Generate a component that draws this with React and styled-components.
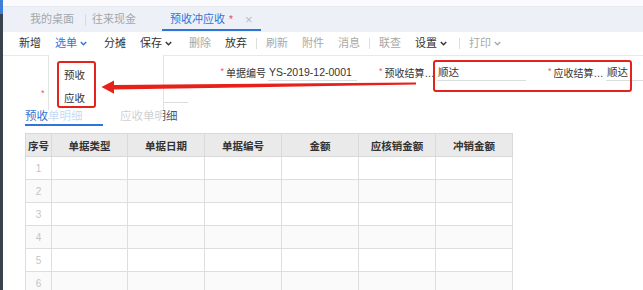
import React from 'react';
import styled, { createGlobalStyle } from 'styled-components';

const Global = createGlobalStyle`
  html, body { margin: 0; padding: 0; background: #fff; }
  body {
    font-family: "Liberation Sans", "Noto Sans CJK SC", sans-serif;
    font-size: 11px;
    color: #333;
  }
`;

const Page = styled.div`
  position: relative;
  width: 643px;
  height: 290px;
  overflow: hidden;
  display: flex;
  align-items: flex-start;
  background: #fff;
`;

const SideBar = styled.div`
  width: 3px;
  height: 290px;
  flex: none;
  background: linear-gradient(#3c7fd8 0 14px, #3a424d 14px);
`;

const Main = styled.div`
  flex: 1;
  min-width: 0;
`;

const TopStrip = styled.div`
  height: 6px;
  background: #fbfbfd;
  border-bottom: 1px solid #e6e9ef;
`;

const TabBar = styled.div`
  height: 25px;
  background: #edf1f7;
  display: flex;
  align-items: stretch;
  padding-left: 21px;
`;

const Tab = styled.div`
  position: relative;
  display: flex;
  align-items: center;
  padding: 0 ${p => (p.$active ? '8px' : '6px')};
  margin-left: ${p => (p.$active ? '20px' : '0')};
  color: ${p => (p.$active ? '#2f74d8' : '#a3a7ae')};
  font-size: 11px;
  line-height: 1;
  &::after {
    content: '';
    display: ${p => (p.$active ? 'block' : 'none')};
    position: absolute;
    left: 0;
    right: 0;
    bottom: 1px;
    height: 2px;
    background: #2f74d8;
  }
`;

const TabSep = styled.div`
  align-self: center;
  width: 1px;
  height: 12px;
  background: #d5d9e0;
  margin-left: 5px;
`;

const Star = styled.span`
  color: #e94b4b;
  margin-left: 4px;
  font-size: 10px;
`;

const Close = styled.span`
  color: #b9bdc4;
  margin-left: 12px;
  font-size: 13px;
`;

const Toolbar = styled.div`
  height: 23px;
  display: flex;
  align-items: center;
  padding-left: 9px;
  background: #fff;
  border-bottom: 1px solid #e9e9e9;
`;

const toneColor = { normal: '#333', primary: '#2f74d8', disabled: '#a8a8a8' };

const ToolBtn = styled.div`
  display: flex;
  align-items: center;
  padding: 0 7px;
  color: ${p => toneColor[p.$tone || 'normal']};
  font-size: 11px;
  line-height: 1;
  white-space: nowrap;
`;

const Chevron = styled.svg`
  width: 7px;
  height: 5px;
  margin-left: 3px;
  margin-right: 3px;
`;

const ToolSep = styled.div`
  width: 1px;
  height: 11px;
  background: #dedede;
  margin: 0 2px;
`;

const FormGrid = styled.div`
  display: grid;
  grid-template-columns: repeat(4, 169px);
  grid-auto-rows: 19px;
  row-gap: 3px;
  padding: 7px 0 0 38px;
  overflow: hidden;
`;

const Field = styled.div`
  display: flex;
  align-items: center;
  min-width: 0;
`;

const FieldLabel = styled.div`
  width: 56px;
  flex: none;
  display: flex;
  justify-content: ${p => (p.$start ? 'flex-start' : 'flex-end')};
  align-items: center;
  min-width: 0;
  white-space: nowrap;
  font-size: 10px;
  color: #333;
`;

const Req = styled.span`
  color: #e55;
  font-size: 9px;
  margin-right: 2px;
  position: relative;
  top: -2px;
  flex: none;
`;

const LabelText = styled.span`
  overflow: hidden;
  text-overflow: ellipsis;
  min-width: 0;
`;

const InputBox = styled.div`
  width: 88px;
  flex: none;
  margin-left: 2px;
  height: 16px;
  line-height: 16px;
  border-bottom: 1px solid #dcdcdc;
  padding-left: 1px;
  font-size: 10.5px;
  color: #333;
  white-space: nowrap;
  overflow: hidden;
`;

const SubTabs = styled.div`
  height: 22px;
  display: flex;
  align-items: stretch;
  padding-left: 22px;
`;

const SubTab = styled.div`
  position: relative;
  display: flex;
  align-items: center;
  min-width: ${p => (p.$active ? '78px' : '0')};
  margin-right: 17px;
  font-size: 11.5px;
  color: ${p => (p.$active ? '#2f74d8' : '#555')};
  &::after {
    content: '';
    display: ${p => (p.$active ? 'block' : 'none')};
    position: absolute;
    left: 0;
    right: 0;
    bottom: 0;
    height: 2px;
    background: #2f74d8;
  }
`;

const Grid = styled.table`
  margin: 7px 0 0 22px;
  border-collapse: collapse;
  table-layout: fixed;
  width: 487px;
`;

const Th = styled.th`
  height: 22px;
  padding: 0;
  background: #eaeaea;
  border: 1px solid #d9d9d9;
  font-size: 10.5px;
  font-weight: bold;
  color: #333;
  text-align: center;
`;

const Td = styled.td`
  height: 22px;
  padding: 0;
  border: 1px solid #dedede;
  background: ${p => (p.$alt ? '#fafafa' : '#fff')};
  text-align: center;
  font-size: 10px;
  color: ${p => (p.$num ? '#c4c4c4' : '#333')};
`;

const Dropdown = styled.div`
  position: absolute;
  left: 48px;
  top: 55px;
  width: 116px;
  height: 55px;
  padding-top: 9px;
  box-sizing: border-box;
  background: #fff;
  border-left: 1px solid #e3e3e3;
  border-right: 1px solid #e3e3e3;
  &::after {
    content: '';
    position: absolute;
    left: 0;
    right: 0;
    top: 100%;
    height: 12px;
    background: rgba(255, 255, 255, 0.72);
  }
`;

const MenuItem = styled.div`
  height: 23px;
  line-height: 23px;
  padding-left: 15px;
  font-size: 10.5px;
  color: #333;
`;

const Highlight = styled.div`
  position: absolute;
  box-sizing: border-box;
  border: 2px solid #e3231c;
  border-radius: 3px;
  left: ${p => p.$x}px;
  top: ${p => p.$y}px;
  width: ${p => p.$w}px;
  height: ${p => p.$h}px;
`;

const ArrowLayer = styled.svg`
  position: absolute;
  left: 0;
  top: 0;
  width: 643px;
  height: 290px;
  pointer-events: none;
`;

const Caret = () => (
  <Chevron viewBox="0 0 7 5">
    <path d="M0.8 0.9 L3.5 3.7 L6.2 0.9" fill="none" stroke="currentColor" strokeWidth="1.4" />
  </Chevron>
);

const tools = [
  { t: '新增' },
  { t: '选单', tone: 'primary', caret: true },
  { t: '分摊' },
  { t: '保存', caret: true },
  { t: '删除', tone: 'disabled' },
  { t: '放弃' },
  { sep: true },
  { t: '刷新', tone: 'disabled' },
  { t: '附件', tone: 'disabled' },
  { t: '消息', tone: 'disabled' },
  { sep: true },
  { t: '联查', tone: 'disabled' },
  { t: '设置', caret: true },
  { sep: true },
  { t: '打印', tone: 'disabled', caret: true },
];

const columns = ['序号', '单据类型', '单据日期', '单据编号', '金额', '应核销金额', '冲销金额'];
const widths = [26, 76, 77, 77, 77, 77, 77];

export default function App() {
  return (
    <>
      <Global />
      <Page>
        <SideBar />
        <Main>
          <TopStrip />
          <TabBar>
            <Tab>我的桌面</Tab>
            <TabSep />
            <Tab>往来现金</Tab>
            <Tab $active>
              预收冲应收<Star>*</Star>
              <Close>×</Close>
            </Tab>
          </TabBar>
          <Toolbar>
            {tools.map((b, i) =>
              b.sep ? (
                <ToolSep key={i} />
              ) : (
                <ToolBtn key={i} $tone={b.tone}>
                  {b.t}
                  {b.caret && <Caret />}
                </ToolBtn>
              )
            )}
          </Toolbar>
          <FormGrid>
            <Field />
            <Field>
              <FieldLabel>
                <Req>*</Req>
                <LabelText>单据编号</LabelText>
              </FieldLabel>
              <InputBox>YS-2019-12-0001</InputBox>
            </Field>
            <Field>
              <FieldLabel>
                <Req>*</Req>
                <LabelText>预收结算方式</LabelText>
              </FieldLabel>
              <InputBox>顺达</InputBox>
            </Field>
            <Field>
              <FieldLabel>
                <Req>*</Req>
                <LabelText>应收结算方式</LabelText>
              </FieldLabel>
              <InputBox>顺达</InputBox>
            </Field>
            <Field>
              <FieldLabel $start>
                <Req>*</Req>
              </FieldLabel>
              <InputBox />
            </Field>
          </FormGrid>
          <SubTabs>
            <SubTab $active>预收单明细</SubTab>
            <SubTab>应收单明细</SubTab>
          </SubTabs>
          <Grid>
            <colgroup>
              {widths.map((w, i) => (
                <col key={i} style={{ width: w }} />
              ))}
            </colgroup>
            <thead>
              <tr>
                {columns.map(c => (
                  <Th key={c}>{c}</Th>
                ))}
              </tr>
            </thead>
            <tbody>
              {[1, 2, 3, 4, 5, 6].map(n => (
                <tr key={n}>
                  <Td $num $alt={n % 2 === 0}>{n}</Td>
                  {columns.slice(1).map(c => (
                    <Td key={c} $alt={n % 2 === 0} />
                  ))}
                </tr>
              ))}
            </tbody>
          </Grid>
        </Main>
        <Dropdown>
          <MenuItem>预收</MenuItem>
          <MenuItem>应收</MenuItem>
        </Dropdown>
        <Highlight $x={57} $y={61} $w={39} $h={47} />
        <Highlight $x={433} $y={60} $w={199} $h={32} />
        <ArrowLayer viewBox="0 0 643 290">
          <polygon
            points="416,82.4 114,85 114,80.5 101.5,87 114,93.8 114,89.6 416,84.6"
            fill="#e8201a"
          />
        </ArrowLayer>
      </Page>
    </>
  );
}
